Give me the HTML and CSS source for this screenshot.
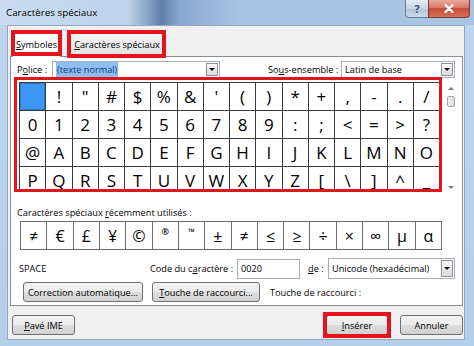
FILE: index.html
```html
<!DOCTYPE html>
<html>
<head>
	<meta charset="UTF-8">
	<title>Caractères spéciaux</title>
	<link rel="stylesheet" href="styles.css">
</head>
<body>
<div class="CLS_Window">

	<div class="CLS_TitleBar">
		<span class="CLS_Title">Caractères spéciaux</span>
		<div class="CLS_Caption">
			<span class="CLS_BtnHelp">?</span>
			<span class="CLS_BtnClose">
				<svg width="12" height="9" viewBox="0 0 12 9"><path d="M2.5 1 L9.5 8 M9.5 1 L2.5 8" stroke="#fff" stroke-width="2.2" stroke-linecap="round"/></svg>
			</span>
		</div>
	</div>

	<div class="CLS_Client">

		<div class="CLS_Tabs">
			<div class="CLS_Tab CLS_TabOn CLS_Mark"><span><u>S</u>ymboles</span></div>
			<div class="CLS_Tab CLS_Tab2 CLS_Mark"><span><u>C</u>aractères spéciaux</span></div>
		</div>

		<div class="CLS_Panel">

			<div class="CLS_FontRow">
				<span class="CLS_LblFont">P<u>o</u>lice :</span>
				<div class="CLS_Combo CLS_ComboFont">
					<span class="CLS_ComboText"><span class="CLS_Sel">(texte normal)</span></span>
					<span class="CLS_ComboBtn"></span>
				</div>
				<span class="CLS_LblSub">So<u>u</u>s-ensemble :</span>
				<div class="CLS_Combo CLS_ComboSub">
					<span class="CLS_ComboText">Latin de base</span>
					<span class="CLS_ComboBtn"></span>
				</div>
			</div>

			<div class="CLS_GridArea">
				<div class="CLS_GridWrap CLS_Mark">
					<div class="CLS_Grid">
						<span class="CLS_Cur"></span><span>!</span><span>"</span><span>#</span><span>$</span><span>%</span><span>&amp;</span><span>'</span>
						<span>(</span><span>)</span><span>*</span><span>+</span><span>,</span><span>-</span><span>.</span><span>/</span>
						<span>0</span><span>1</span><span>2</span><span>3</span><span>4</span><span>5</span><span>6</span><span>7</span>
						<span>8</span><span>9</span><span>:</span><span>;</span><span>&lt;</span><span>=</span><span>&gt;</span><span>?</span>
						<span>@</span><span>A</span><span>B</span><span>C</span><span>D</span><span>E</span><span>F</span><span>G</span>
						<span>H</span><span>I</span><span>J</span><span>K</span><span>L</span><span>M</span><span>N</span><span>O</span>
						<span>P</span><span>Q</span><span>R</span><span>S</span><span>T</span><span>U</span><span>V</span><span>W</span>
						<span>X</span><span>Y</span><span>Z</span><span>[</span><span>\</span><span>]</span><span>^</span><span>_</span>
					</div>
				</div>
				<div class="CLS_VScroll">
					<span class="CLS_ArrUp"></span>
					<span class="CLS_Thumb"></span>
					<span class="CLS_ArrDown"></span>
				</div>
			</div>

			<div class="CLS_RecentLbl">Caractères spéciaux <u>r</u>écemment utilisés :</div>
			<div class="CLS_Recent">
				<span>≠</span><span>€</span><span>£</span><span>¥</span><span>©</span><span class="CLS_Sm">®</span><span class="CLS_Sm">™</span><span>±</span>
				<span>≠</span><span>≤</span><span>≥</span><span>÷</span><span>×</span><span>∞</span><span>µ</span><span>α</span>
			</div>

			<div class="CLS_InfoRow">
				<span class="CLS_CharName">SPACE</span>
				<span class="CLS_LblCode">Code du c<u>a</u>ractère :</span>
				<span class="CLS_Input">0020</span>
				<span class="CLS_LblFrom"><u>d</u>e :</span>
				<div class="CLS_Combo CLS_ComboFrom">
					<span class="CLS_ComboText">Unicode (hexadécimal)</span>
					<span class="CLS_ComboBtn"></span>
				</div>
			</div>

			<div class="CLS_BtnRow">
				<span class="CLS_Btn CLS_BtnAuto">Correction automatique...</span>
				<span class="CLS_Btn CLS_BtnKey"><u>T</u>ouche de raccourci...</span>
				<span class="CLS_LblKey">Touche de raccourci :</span>
			</div>

		</div>

		<div class="CLS_Footer">
			<span class="CLS_Btn CLS_BtnIme"><u>P</u>avé IME</span>
			<span class="CLS_Btn CLS_BtnOk CLS_Mark"><u>I</u>nsérer</span>
			<span class="CLS_Btn CLS_BtnCancel">Annuler</span>
		</div>

	</div>
</div>
</body>
</html>
```

FILE: styles.css
```css
body {
	margin: 0;
	font-family: "Open Sans", "Noto Sans", sans-serif;
	font-size: 9.2px;
	color: #000;
	background: #b9d1ea;
}

u {
	text-decoration-thickness: 1px;
	text-underline-offset: 1px;
}

.CLS_Window {
	width: 474px;
	height: 346px;
	box-sizing: border-box;
	padding: 0 9px 6px 7px;
	display: flex;
	flex-direction: column;
	background: linear-gradient(180deg, #bfd5ed, #b5cee9);
	overflow: hidden;
}

/* title bar */
.CLS_TitleBar {
	height: 25px;
	flex: none;
	margin: 0 -9px 0 -7px;
	padding-left: 6px;
	display: flex;
	align-items: flex-start;
	background: linear-gradient(90deg, #c8dbef 0, #bed3eb 27%, #8aa7c9 31%, #5f7fa8 34%, #88a8ce 38%, #a7c3e3 50%, #aac5e4 100%);
}

.CLS_Title {
	line-height: 25px;
	font-size: 9.8px;
}

.CLS_Caption {
	margin-left: auto;
	margin-right: 4px;
	display: flex;
}

.CLS_BtnHelp {
	width: 23px;
	height: 18px;
	box-sizing: border-box;
	border: 1px solid #6a7d96;
	border-top: none;
	border-right: none;
	border-radius: 0 0 0 4px;
	background: linear-gradient(#e6edf6, #c9d6e6 50%, #b3c4d9 51%, #cbd9ea);
	display: flex;
	align-items: center;
	justify-content: center;
	font-weight: bold;
	font-size: 11px;
	color: #3d5170;
}

.CLS_BtnClose {
	width: 42px;
	height: 18px;
	box-sizing: border-box;
	border: 1px solid #7d3a32;
	border-top: none;
	border-radius: 0 0 4px 0;
	background: linear-gradient(#e9a898, #d8786a 45%, #c5503c 50%, #d46f55);
	display: flex;
	align-items: center;
	justify-content: center;
}

/* client area */
.CLS_Client {
	flex: 1;
	background: #f0f0f0;
	border: 1px solid #90a6c1;
	display: flex;
	flex-direction: column;
}

.CLS_Tabs {
	height: 30px;
	flex: none;
	display: flex;
	align-items: flex-end;
	padding-left: 4px;
}

.CLS_Tab {
	box-sizing: border-box;
	border: 1px solid #898c95;
	border-bottom: none;
	border-radius: 2px 2px 0 0;
	display: flex;
	align-items: center;
	justify-content: center;
}

.CLS_TabOn {
	width: 49px;
	height: 27px;
	margin-bottom: -1px;
	background: #fff;
	z-index: 1;
}

.CLS_Tab2 {
	width: 98px;
	height: 24px;
	margin-left: 7px;
	background: linear-gradient(#f4f4f4, #e2e2e2);
}

/* red annotation frames */
.CLS_Mark {
	position: relative;
}

.CLS_Mark::after {
	content: '';
	position: absolute;
	border: 4px solid #e2151d;
	pointer-events: none;
	z-index: 2;
}

.CLS_TabOn::after { top: -1px; left: -2px; right: -2px; bottom: 1px; }
.CLS_Tab2::after { top: -3px; left: -2px; right: -1px; bottom: -2px; }
.CLS_GridWrap::after { top: -5px; left: -5px; right: -2px; bottom: -1px; border-width: 3px; }
.CLS_BtnOk::after { top: -4px; left: -4px; right: -4px; bottom: -4px; }

/* tab panel */
.CLS_Panel {
	width: 453px;
	height: 250px;
	box-sizing: border-box;
	margin-left: 2px;
	border: 1px solid #898c95;
	background: #fff;
	padding: 4px 0 0 6px;
	display: flex;
	flex-direction: column;
}

.CLS_FontRow {
	height: 17px;
	display: flex;
	align-items: center;
}

.CLS_LblFont {
	width: 35px;
}

.CLS_LblSub {
	width: 73px;
	margin-left: 48px;
}

.CLS_Combo {
	height: 17px;
	box-sizing: border-box;
	border: 1px solid #a9afb8;
	background: #fff;
	display: flex;
	align-items: center;
}

.CLS_ComboFont { width: 168px; }
.CLS_ComboSub { width: 114px; }
.CLS_ComboFrom { width: 127px; height: 21px; }

.CLS_ComboText {
	flex: 1;
	padding-left: 3px;
	white-space: nowrap;
}

.CLS_Sel {
	background: #8ebdf0;
	color: #173a86;
	padding: 1px 1px;
}

.CLS_ComboBtn {
	width: 12px;
	height: 13px;
	margin-right: 1px;
	box-sizing: border-box;
	border: 1px solid #8d9299;
	background: linear-gradient(#f7f7f7, #dadada);
	display: flex;
	align-items: center;
	justify-content: center;
}

.CLS_ComboFrom .CLS_ComboBtn {
	height: 17px;
}

.CLS_ComboBtn::before {
	content: '';
	border-left: 3px solid transparent;
	border-right: 3px solid transparent;
	border-top: 3px solid #111;
}

/* character grid */
.CLS_GridArea {
	height: 109px;
	margin-top: 4px;
	margin-left: 2px;
	display: flex;
}

.CLS_Grid {
	width: 421px;
	height: 109px;
	box-sizing: border-box;
	border: 1px solid #3a3a3a;
	background: #3a3a3a;
	display: grid;
	grid-template-columns: repeat(16, 1fr);
	grid-auto-rows: 27px;
	gap: 1px;
	overflow: hidden;
}

.CLS_Grid span, .CLS_Recent span {
	background: #fff;
	display: flex;
	align-items: center;
	justify-content: center;
}

.CLS_Grid span {
	font-size: 17px;
}

.CLS_Grid .CLS_Cur {
	background: #3d97f2;
	box-shadow: inset 0 0 0 1px #2a78d0;
}

.CLS_VScroll {
	width: 9px;
	margin-left: 6px;
	display: flex;
	flex-direction: column;
	align-items: center;
	padding: 5px 0 2px;
}

.CLS_ArrUp {
	border-left: 3px solid transparent;
	border-right: 3px solid transparent;
	border-bottom: 3px solid #7a7a7a;
}

.CLS_ArrDown {
	margin-top: auto;
	border-left: 3px solid transparent;
	border-right: 3px solid transparent;
	border-top: 3px solid #7a7a7a;
}

.CLS_Thumb {
	width: 8px;
	height: 11px;
	margin-top: 6px;
	box-sizing: border-box;
	border: 1px solid #a6a6a6;
	border-radius: 2px;
	background: linear-gradient(90deg, #f0f0f0, #dedede);
}

/* recently used */
.CLS_RecentLbl {
	margin-top: 15px;
	line-height: 14px;
}

.CLS_Recent {
	width: 422px;
	height: 29px;
	margin-top: 1px;
	margin-left: 3px;
	box-sizing: border-box;
	border: 1px solid #6c6c6c;
	background: #6c6c6c;
	display: grid;
	grid-template-columns: repeat(16, 1fr);
	gap: 1px;
}

.CLS_Recent span {
	font-size: 16px;
}

.CLS_Recent .CLS_Sm {
	font-size: 9px;
	font-weight: bold;
	padding-bottom: 8px;
}

/* code row */
.CLS_InfoRow {
	height: 21px;
	margin-top: 8px;
	padding-left: 2px;
	display: flex;
	align-items: center;
}

.CLS_CharName { width: 131px; }
.CLS_LblCode { width: 87px; }

.CLS_Input {
	width: 63px;
	height: 20px;
	box-sizing: border-box;
	border: 1px solid #a9afb8;
	padding-left: 3px;
	line-height: 18px;
}

.CLS_LblFrom {
	width: 20px;
	margin-left: 8px;
}

/* buttons */
.CLS_BtnRow {
	height: 20px;
	margin-top: 3px;
	display: flex;
	align-items: center;
}

.CLS_Btn {
	height: 20px;
	box-sizing: border-box;
	border: 1px solid #707070;
	border-radius: 3px;
	background: linear-gradient(#f3f3f3, #ebebeb 48%, #dedede 52%, #d0d0d0);
	display: flex;
	align-items: center;
	justify-content: center;
	white-space: nowrap;
}

.CLS_BtnAuto { width: 120px; margin-left: 6px; }
.CLS_BtnKey { width: 108px; margin-left: 9px; }
.CLS_LblKey { margin-left: 10px; }

.CLS_Footer {
	display: flex;
	align-items: flex-start;
	padding: 9px 1px 0 4px;
}

.CLS_BtnIme { width: 63px; }
.CLS_BtnOk { width: 62px; margin-left: auto; border-color: #3c7fb1; }
.CLS_BtnCancel { width: 63px; margin-left: 12px; }
```
